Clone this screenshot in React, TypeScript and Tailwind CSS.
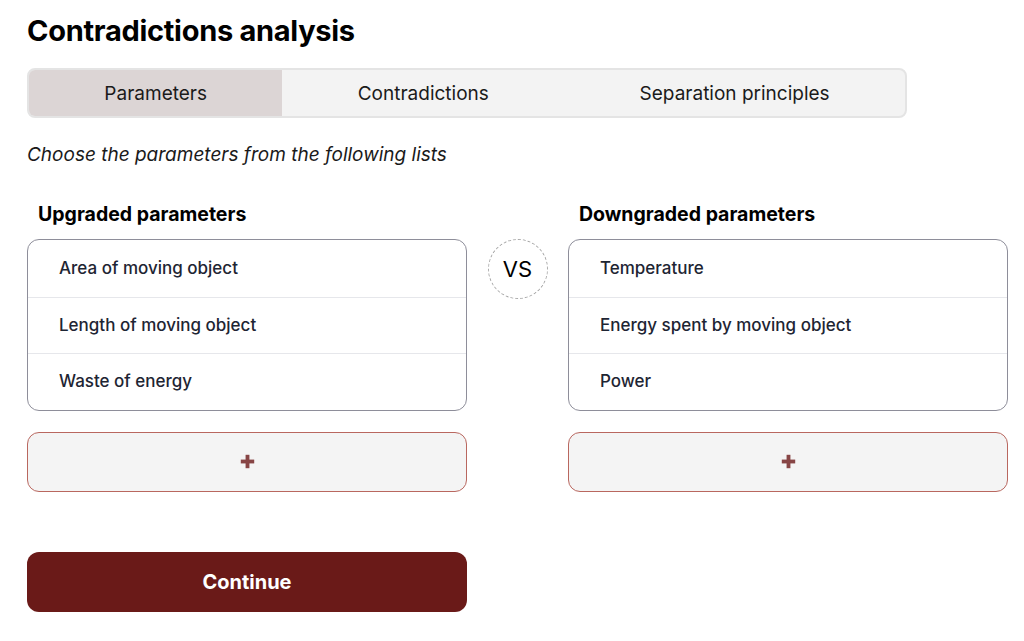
import {Plus} from 'lucide-react';

const tabs = ['Parameters', 'Contradictions', 'Separation principles'];
const upgraded = ['Area of moving object', 'Length of moving object', 'Waste of energy'];
const downgraded = ['Temperature', 'Energy spent by moving object', 'Power'];

function ParamColumn({title, items}: {title: string; items: string[]}) {
  return (
    <div className="flex w-[440px] shrink-0 flex-col">
      <h2 className="h-[26px] pl-[11px] text-[19.5px] leading-[26px] font-bold text-black">
        {title}
      </h2>
      <ul className="mt-[12px] overflow-hidden rounded-xl border border-[#8e8e9a] bg-white">
        {items.map((item, i) => (
          <li
            key={item}
            className={
              'flex h-[56.5px] items-center pl-[31px] text-[17px] font-medium text-[#1e2533]' +
              (i > 0 ? ' border-t border-[#e6e7eb]' : '')
            }
          >
            {item}
          </li>
        ))}
      </ul>
      <button
        type="button"
        className="mt-[21px] flex h-[60px] items-center justify-center rounded-xl border border-[#b9675f] bg-[#f4f4f4] text-[#874545]"
      >
        <Plus size={23} strokeWidth={4} strokeLinecap="butt" />
      </button>
    </div>
  );
}

export default function App() {
  return (
    <div className="min-h-screen bg-white px-[27px] pt-[13px] font-['Inter',sans-serif] text-black">
      <h1 className="text-[29px] leading-[36px] font-bold tracking-[-0.01em]">
        Contradictions analysis
      </h1>

      <div className="mt-[19px] flex h-[50px] w-[880px] overflow-hidden rounded-lg border-2 border-[#e4e4e4] bg-[#f3f3f3]">
        {tabs.map((tab, i) => (
          <div
            key={tab}
            className={
              'flex flex-auto items-center justify-center pt-[2px] text-[19px] text-[#1a1a1a]' +
              (i === 0 ? ' bg-[#dcd5d5]' : '')
            }
          >
            {tab}
          </div>
        ))}
      </div>

      <p className="mt-[24px] text-[19px] leading-[26px] italic text-[#1a1a1a]">
        Choose the parameters from the following lists
      </p>

      <div className="mt-[33px] flex">
        <ParamColumn title="Upgraded parameters" items={upgraded} />
        <div className="flex w-[101px] shrink-0 justify-center pt-[38px]">
          <div className="flex h-[60px] w-[60px] items-center justify-center rounded-full border border-dashed border-[#a8a8a8] text-[22px] text-black">
            VS
          </div>
        </div>
        <ParamColumn title="Downgraded parameters" items={downgraded} />
      </div>

      <button
        type="button"
        className="mt-[60px] flex h-[60px] w-[440px] items-center justify-center rounded-xl bg-[#6a1a18] text-[20px] font-bold text-white"
      >
        Continue
      </button>
    </div>
  );
}
